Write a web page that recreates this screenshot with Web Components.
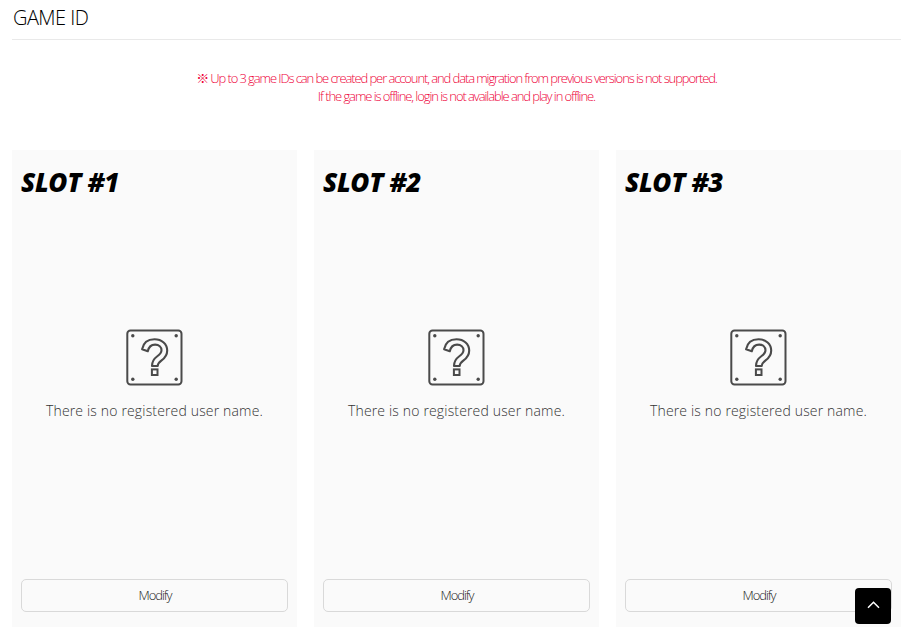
<!DOCTYPE html>
<html lang="en">
<head>
<meta charset="utf-8">
<title>Game ID</title>
<style>
  body {
    margin: 0;
    height: 627px;
    overflow: hidden;
    background: #fff;
    font-family: "Open Sans", "Noto Sans CJK KR", sans-serif;
    font-weight: 300;
  }
</style>
</head>
<body>
<game-id-page>
  <span slot="title">GAME ID</span>
  <notice-line slot="notice" style="letter-spacing: -1.1px">※ Up to 3 game IDs can be created per account, and data migration from previous versions is not supported.</notice-line>
  <notice-line slot="notice">If the game is offline, login is not available and play in offline.</notice-line>
  <slot-card number="1"></slot-card>
  <slot-card number="2"></slot-card>
  <slot-card number="3"></slot-card>
</game-id-page>
<to-top></to-top>

<script>
function attach(el, html) {
  const template = document.createElement("template");
  template.innerHTML = html;
  el.attachShadow({ mode: "open" }).appendChild(template.content.cloneNode(true));
}

class GameIdPage extends HTMLElement {
  constructor() {
    super();
    attach(this, `
      <style>
        :host { display: block; padding: 0 7px 0 12px; }
        h1 {
          box-sizing: border-box; height: 40px; margin: 0; padding-left: 1px;
          border-bottom: 1px solid #e9e9e9;
          font-size: 20px; font-weight: 300; line-height: 35px; letter-spacing: -0.55px; color: #000;
        }
        .notice { height: 81px; padding-top: 29px; }
        .cards { display: grid; grid-template-columns: repeat(3, 1fr); gap: 17px; }
      </style>
      <h1><slot name="title"></slot></h1>
      <div class="notice"><slot name="notice"></slot></div>
      <div class="cards"><slot></slot></div>
    `);
  }
}

class NoticeLine extends HTMLElement {
  constructor() {
    super();
    attach(this, `
      <style>
        :host {
          display: block; height: 18px; text-align: center; white-space: nowrap;
          font-size: 13px; line-height: 18px; letter-spacing: -1.08px; color: #ee0038;
        }
      </style>
      <slot></slot>
    `);
  }
}

class MysteryBlock extends HTMLElement {
  constructor() {
    super();
    attach(this, `
      <style>
        :host { display: block; width: 59px; height: 58px; }
        svg { display: block; }
      </style>
      <svg width="58" height="58" viewBox="0 0 58 58" fill="none" stroke="#4a4a4a" stroke-width="2">
        <rect x="2.3" y="2.5" width="54.2" height="54" rx="3.2"/>
        <path transform="translate(.9 0)" stroke-width="2.1" stroke-linejoin="round" d="M16.2 21.3C17.4 14.6 22.3 11.2 28.6 11.2C36 11.2 41.3 16 41.3 22.5C41.3 27 39.2 29.8 35.7 32.4C32.7 34.6 31.8 35.5 31.8 38H26.1C26.1 33.4 27.4 31.2 31.1 28.5C34.3 26.2 35.6 24.9 35.6 22.2C35.6 18.9 33.1 16.6 29.2 16.6C25.2 16.6 22.8 19.2 21.9 23.2Z"/>
        <rect x="26.9" y="41.4" width="5.6" height="5.6" stroke-width="2"/>
        <g fill="#4a4a4a" stroke="none">
          <circle cx="7.8" cy="7.7" r="1.7"/><circle cx="51.2" cy="7.7" r="1.7"/>
          <circle cx="7.8" cy="51.3" r="1.7"/><circle cx="51.2" cy="51.3" r="1.7"/>
        </g>
      </svg>
    `);
  }
}

class ModifyButton extends HTMLElement {
  constructor() {
    super();
    attach(this, `
      <style>
        :host { display: block; }
        button {
          display: block; box-sizing: border-box; width: 100%; height: 33px; padding: 0 0 1px 1px;
          border: 1px solid #d9d9d9; border-radius: 5px; background: transparent;
          font: inherit; font-size: 13px; letter-spacing: -1.08px; color: #222;
        }
      </style>
      <button type="button"><slot></slot></button>
    `);
  }
}

class SlotCard extends HTMLElement {
  constructor() {
    super();
    attach(this, `
      <style>
        :host {
          display: flex; flex-direction: column; box-sizing: border-box;
          height: 480px; padding: 14px 9px 18px; background: #fafafa;
        }
        h2 {
          margin: 0; height: 36px; font-size: 26px; font-weight: 800; font-style: italic;
          line-height: 36px; letter-spacing: -0.3px; color: #000;
        }
        .empty { flex: 1; display: flex; flex-direction: column; align-items: center; padding-top: 128px; }
        mystery-block { margin-right: 1px; }
        p { margin: 15px 0 0; font-size: 14px; line-height: 20px; letter-spacing: 0.16px; white-space: nowrap; color: #333; }
      </style>
      <h2>SLOT #<span></span></h2>
      <div class="empty">
        <mystery-block></mystery-block>
        <p>There is no registered user name.</p>
      </div>
      <modify-button>Modify</modify-button>
    `);
  }

  connectedCallback() {
    this.shadowRoot.querySelector("h2 span").textContent = this.getAttribute("number");
  }
}

class ToTop extends HTMLElement {
  constructor() {
    super();
    attach(this, `
      <style>
        :host { position: fixed; right: 17px; bottom: 3px; width: 36px; height: 36px; }
        button { display: block; width: 36px; height: 36px; padding: 0; border: 0; border-radius: 4px; background: #000; }
        svg { display: block; }
      </style>
      <button type="button" aria-label="Back to top">
        <svg width="36" height="36" fill="none" stroke="#fff" stroke-width="1.5"><path d="M13 19.8L18.5 14.3L24 19.8"/></svg>
      </button>
    `);
  }
}

customElements.define("game-id-page", GameIdPage);
customElements.define("notice-line", NoticeLine);
customElements.define("mystery-block", MysteryBlock);
customElements.define("modify-button", ModifyButton);
customElements.define("slot-card", SlotCard);
customElements.define("to-top", ToTop);
</script>
</body>
</html>
